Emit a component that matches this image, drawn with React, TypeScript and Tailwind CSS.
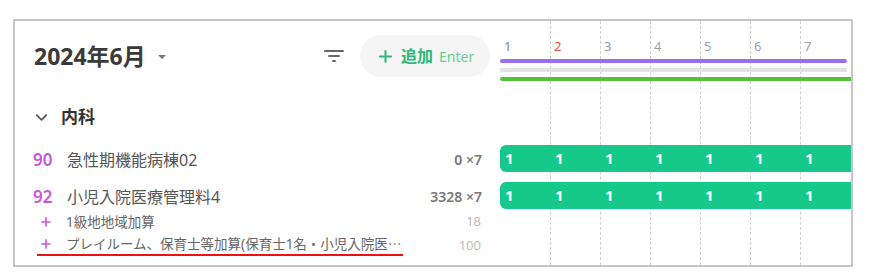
import { ChevronDown, Plus } from "lucide-react";

const FONT = { fontFamily: '"Noto Sans", "Noto Sans CJK JP", sans-serif' };

const DAYS = [
  { d: 1, cls: "text-[#8d78b8]" },
  { d: 2, cls: "text-[#e0504a]" },
  { d: 3, cls: "text-[#9aa0aa]" },
  { d: 4, cls: "text-[#9aa0aa]" },
  { d: 5, cls: "text-[#8fa6b8]" },
  { d: 6, cls: "text-[#9aa0aa]" },
  { d: 7, cls: "text-[#9aa0aa]" },
];

function FilterIcon() {
  return (
    <svg width="20" height="12" viewBox="0 0 20 12" className="text-[#666]">
      <rect x="0" y="0" width="20" height="2" rx="1" fill="currentColor" />
      <rect x="4" y="5" width="12" height="2" rx="1" fill="currentColor" />
      <rect x="8" y="10" width="4" height="2" rx="1" fill="currentColor" />
    </svg>
  );
}

function Bar() {
  return (
    <div className="flex h-[27px] rounded-l-[6px] bg-[#16c98b]">
      {DAYS.map((d) => (
        <div
          key={d.d}
          className="w-[50px] pl-[5px] text-[15px] font-bold leading-[27px] text-white"
        >
          1
        </div>
      ))}
    </div>
  );
}

export default function App() {
  return (
    <div className="h-[279px] w-[876px] bg-white pl-[13px] pt-[19px]" style={FONT}>
      <div className="flex h-[248px] w-[840px] overflow-hidden border-2 border-[#c6c6c6] bg-white">
        {/* Left list */}
        <div className="w-[485px] shrink-0">
          <div className="flex h-[70px] items-center pl-[19px] pr-[10px]">
            <span className="text-[23px] font-bold text-[#3a3a3a]">2024年6月</span>
            <span className="ml-[12px] mt-[2px] h-0 w-0 border-x-[4px] border-t-[4px] border-x-transparent border-t-[#777]" />
            <div className="ml-auto mr-[16px]">
              <FilterIcon />
            </div>
            <div className="flex h-[42px] w-[130px] items-center rounded-full bg-[#f4f5f4] pl-[16px]">
              <Plus size={19} strokeWidth={2.6} className="text-[#2fb877]" />
              <span className="ml-[6px] text-[16px] font-bold text-[#2fb877]">追加</span>
              <span className="ml-[6px] text-[14px] text-[#6ccd98]">Enter</span>
            </div>
          </div>

          <div className="flex h-[52px] items-center pl-[17px]">
            <ChevronDown size={19} strokeWidth={2.2} className="text-[#555]" />
            <span className="ml-[10px] text-[17px] font-bold text-[#333]">内科</span>
          </div>

          <div className="mt-[3px] flex h-[27px] items-center pl-[18px] pr-[18px]">
            <span className="w-[34px] text-[17px] font-semibold text-[#c65ad8]">90</span>
            <span className="text-[16px] text-[#555]">急性期機能病棟02</span>
            <span className="ml-auto text-[14px] font-semibold text-[#777]">0 ×7</span>
          </div>

          <div className="mt-[10px] flex h-[27px] items-center pl-[18px] pr-[18px]">
            <span className="w-[34px] text-[17px] font-semibold text-[#c65ad8]">92</span>
            <span className="text-[16px] text-[#555]">小児入院医療管理料4</span>
            <span className="ml-auto text-[14px] font-semibold text-[#777]">3328 ×7</span>
          </div>

          <div className="flex h-[24px] items-center pl-[24px] pr-[19px]">
            <Plus size={14} strokeWidth={2.8} className="text-[#c65ad8]" />
            <span className="ml-[13px] text-[13.5px] text-[#666]">1級地地域加算</span>
            <span className="ml-auto text-[13px] text-[#bbb]">18</span>
          </div>

          <div className="flex h-[24px] items-start pr-[19px]">
            <div className="ml-[22px] flex h-[22px] items-center border-b-2 border-[#ee1111] pl-[2px] pr-[2px]">
              <Plus size={14} strokeWidth={2.8} className="shrink-0 text-[#c65ad8]" />
              <span className="ml-[13px] whitespace-nowrap text-[13.5px] text-[#666]">
                プレイルーム、保育士等加算(保育士1名・小児入院医
                <span className="font-['Noto_Sans_CJK_JP']">…</span>
              </span>
            </div>
            <span className="ml-auto mt-[2px] text-[13px] text-[#bbb]">100</span>
          </div>
        </div>

        {/* Timeline */}
        <div className="relative flex-1">
          <div className="absolute inset-0 flex">
            {DAYS.map((d, i) => (
              <div
                key={d.d}
                className={`h-full w-[50px] ${i > 0 ? "border-l border-dashed border-[#cfcfcf]" : ""}`}
              />
            ))}
          </div>
          <div className="relative">
            <div className="flex h-[35px] items-end">
              {DAYS.map((d) => (
                <div key={d.d} className={`w-[50px] pl-[4px] text-[13px] ${d.cls}`}>
                  {d.d}
                </div>
              ))}
            </div>
            <div className="mt-[3px] h-[4px] w-[347px] rounded-full bg-[#9d6df0]" />
            <div className="mt-[5px] h-[4px] w-[347px] bg-[#e3e3e3]" />
            <div className="mt-[5px] h-[4px] rounded-l-full bg-[#55c23c]" />
            <div className="mt-[64px]">
              <Bar />
            </div>
            <div className="mt-[10px]">
              <Bar />
            </div>
          </div>
        </div>
      </div>
    </div>
  );
}
